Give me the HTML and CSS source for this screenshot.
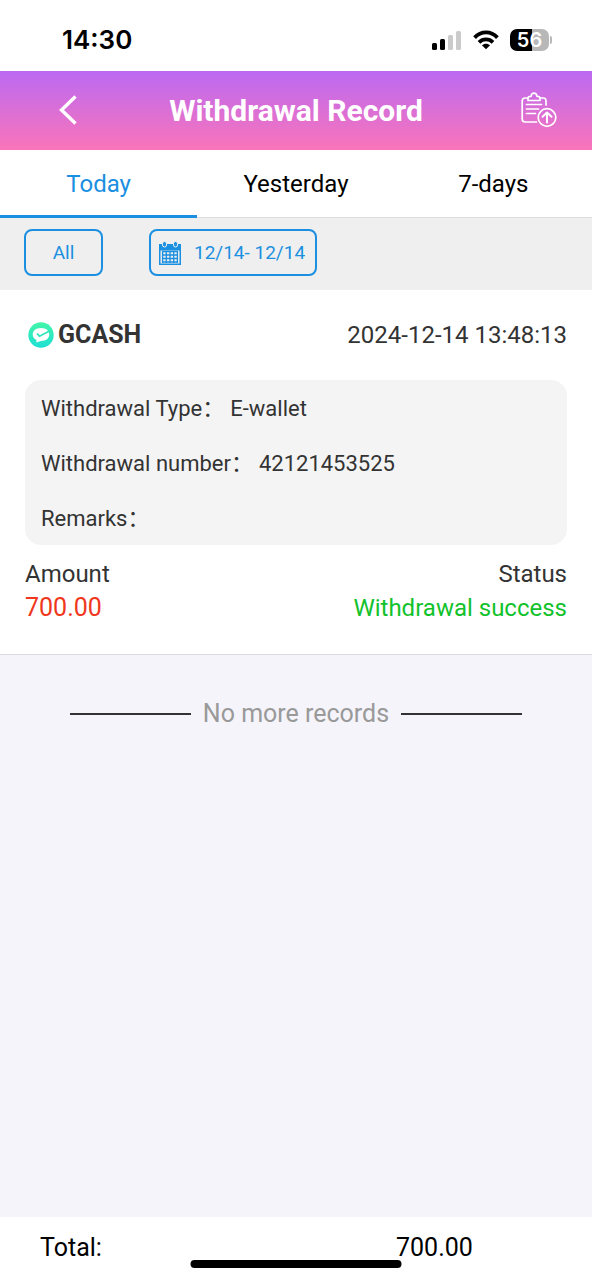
FILE: index.html
```html
<!DOCTYPE html>
<html lang="en">
<head>
<meta charset="utf-8">
<meta name="viewport" content="width=device-width, initial-scale=1">
<title>Withdrawal Record</title>
<link rel="stylesheet" href="styles.css">
</head>
<body>
<div class="app">
  <div class="status-bar">
    <time class="clock">14:30</time>
    <div class="indicators">
      <svg class="signal" width="30" height="19" viewBox="0 0 30 19" aria-hidden="true">
        <rect x="0" y="12" width="5" height="7" rx="1.5" fill="#000"/>
        <rect x="8" y="8" width="5" height="11" rx="1.5" fill="#000"/>
        <rect x="16" y="4" width="5" height="15" rx="1.5" fill="#cbcbcb"/>
        <rect x="24" y="0" width="5" height="19" rx="1.5" fill="#cbcbcb"/>
      </svg>
      <svg class="wifi" width="26" height="20" viewBox="0 0 26 20" aria-hidden="true">
        <g fill="none" stroke="#000" stroke-width="3.8">
          <path d="M1.6 7.6C8 .7 18 .7 24.400 7.600"/>
          <path d="M6 12.300C10 8.500 16 8.500 20 12.300"/>
        </g>
        <path d="M13 19.200 8.900 15.200C11.200 13.100 14.800 13.100 17.100 15.200Z" fill="#000"/>
      </svg>
      <div class="battery"><span class="battery-level">56</span></div>
    </div>
  </div>

  <header class="header">
    <button class="icon-button" type="button" aria-label="Back">
      <svg width="20" height="30" viewBox="0 0 20 30" fill="none" stroke="#fff" stroke-width="3.400"><path d="M17.500 1.500 3.500 15 17.500 28.500"/></svg>
    </button>
    <h1 class="title">Withdrawal Record</h1>
    <button class="icon-button icon-button-end" type="button" aria-label="Submit withdrawal">
      <svg width="36" height="36" viewBox="0 0 36 36" fill="none" stroke="#fff" stroke-width="1.700" stroke-linecap="round" stroke-linejoin="round">
        <path d="M6.500 6H4Q1.200 6 1.200 9V27Q1.200 30 4 30H15.500M19.500 6H22.500Q25 6 25 9V13"/>
        <path d="M7 8.500V6.500Q7 4.300 9.500 4.300H10Q10.500 1.200 13 1.200T16 4.300H16.500Q19 4.300 19 6.500V8.500Z"/>
        <path d="M5.500 12.500H20.500M5.500 17H17.500M5.500 21.500H14.500"/>
        <circle cx="26" cy="25.500" r="8.800"/>
        <path d="M26 30.500V20.500M21.500 24.800 26 20.500 30.500 24.800" stroke-width="2"/>
      </svg>
    </button>
  </header>

  <nav class="tabs">
    <button class="tab tab-active" type="button">Today</button>
    <button class="tab" type="button">Yesterday</button>
    <button class="tab" type="button">7-days</button>
  </nav>

  <div class="filters">
    <button class="filter filter-all" type="button">All</button>
    <button class="filter filter-date" type="button">
      <svg width="22" height="24" viewBox="0 0 22 24" aria-hidden="true">
        <path fill="#1b8fe0" fill-rule="evenodd" d="M0 3H22V24H0ZM1.500 9.500V22.500H20.500V9.500Z"/>
        <g fill="#1b8fe0" stroke="#efefef" stroke-width="1"><rect x="3.500" y=".5" width="4" height="5.500" rx="2"/><rect x="14.500" y=".5" width="4" height="5.500" rx="2"/></g>
        <path fill="none" stroke="#1b8fe0" stroke-width="1.300" d="M3.600 10.500V22M7.300 10.500V22M11 10.500V22M14.700 10.500V22M18.400 10.500V22M3 10.500H19M3 14H19M3 17.500H19M3 21H19"/>
      </svg>
      <span>12/14- 12/14</span>
    </button>
  </div>

  <main class="content">
    <article class="record">
      <div class="record-head">
        <h2 class="provider">
          <svg width="26" height="26" viewBox="0 0 26 26" aria-hidden="true">
            <defs><linearGradient id="mint" x1="0" y1="0" x2="0" y2="1"><stop offset="0" stop-color="#43f5a8"/><stop offset="1" stop-color="#1ce0d4"/></linearGradient></defs>
            <circle cx="13" cy="13" r="12.700" fill="url(#mint)"/>
            <path d="M13 6C18 6 21.300 8.800 21.300 12.500S18 19 13 19L8.300 20.500 8.500 18C6 17 4.700 15 4.700 12.500 4.700 8.800 8 6 13 6Z" fill="#fff"/>
            <path d="M9 11.500 11.500 14.200 21.500 9" fill="none" stroke="#2fe6bd" stroke-width="1.800"/>
          </svg>
          GCASH
        </h2>
        <time class="stamp">2024-12-14 13:48:13</time>
      </div>
      <dl class="details">
        <div class="detail"><dt>Withdrawal Type：</dt><dd>E-wallet</dd></div>
        <div class="detail"><dt>Withdrawal number：</dt><dd>42121453525</dd></div>
        <div class="detail"><dt>Remarks：</dt><dd></dd></div>
      </dl>
      <div class="summary">
        <div><div class="summary-label">Amount</div><div class="amount">700.00</div></div>
        <div class="summary-end"><div class="summary-label">Status</div><div class="status">Withdrawal success</div></div>
      </div>
    </article>
    <div class="end-note"><span class="rule"></span><span>No more records</span><span class="rule"></span></div>
  </main>

  <footer class="footer">
    <span>Total:</span>
    <span>700.00</span>
    <div class="home-indicator"></div>
  </footer>
</div>
</body>
</html>
```

FILE: styles.css
```css
* { box-sizing: border-box; }

body, h1, h2, dl, dd { margin: 0; }

body {
  background: #f4f4fa;
  color: #333;
  font-family: Roboto, "Noto Sans CJK SC", sans-serif;
  font-size: 24px;
  line-height: 32px;
}

button {
  margin: 0;
  padding: 0;
  border: 0;
  background: none;
  color: inherit;
  font: inherit;
  cursor: pointer;
}

svg { display: block; flex: none; }

.app {
  display: flex;
  flex-direction: column;
  min-height: 100vh;
}

.status-bar {
  display: flex;
  align-items: center;
  justify-content: space-between;
  padding: 24px 43px 15px 62px;
  background: #fff;
}

.clock {
  color: #000;
  font-family: Inter, sans-serif;
  font-size: 26px;
  font-weight: 600;
}

.indicators {
  display: flex;
  align-items: center;
  gap: 11px;
}

.battery {
  position: relative;
  width: 39px;
  height: 22px;
  border-radius: 7px;
  background: linear-gradient(90deg, #000 56%, #b8b8b8 56%);
  color: #fff;
  font-family: Inter, sans-serif;
  font-size: 20px;
  font-weight: 600;
  line-height: 22px;
  text-align: center;
}

.battery::after {
  position: absolute;
  top: 7px;
  right: -3px;
  width: 2px;
  height: 8px;
  border-radius: 0 2px 2px 0;
  background: #b8b8b8;
  content: "";
}

.header {
  display: grid;
  grid-template-columns: 90px 1fr 90px;
  align-items: center;
  padding: 20px 35px 19px;
  background: linear-gradient(#bb6af2, #fa74b9);
  color: #fff;
  text-align: center;
}

.title {
  font-size: 30px;
  font-weight: 700;
  line-height: 40px;
}

.icon-button {
  justify-self: start;
  padding: 0 0 2px 23px;
}

.icon-button-end {
  justify-self: end;
  padding-left: 0;
}

.tabs {
  display: grid;
  grid-template-columns: repeat(3, 1fr);
  background: #fff;
  box-shadow: inset 0 -1px #dedede;
}

.tab {
  padding: 18px 0 15px;
  border-bottom: 3px solid transparent;
  color: #000;
}

.tab-active {
  border-bottom-color: #1b8fe0;
  color: #1b8fe0;
}

.filters {
  display: flex;
  gap: 46px;
  padding: 11px 24px 14px;
  background: #efefef;
}

.filter {
  display: flex;
  align-items: center;
  justify-content: center;
  height: 47px;
  border: 2px solid #1b8fe0;
  border-radius: 8px;
  color: #1b8fe0;
  font-size: 19px;
}

.filter-all { width: 79px; }

.filter-date {
  gap: 13px;
  padding: 0 10px 0 8px;
}

.content { flex: 1; }

.record {
  padding: 29px 25px 30px;
  border-bottom: 1px solid #dcdce0;
  background: #fff;
}

.record-head {
  display: flex;
  align-items: center;
  justify-content: space-between;
}

.provider {
  display: flex;
  align-items: center;
  gap: 4px;
  padding-left: 3px;
  font-size: 25px;
  font-weight: 700;
}

.details {
  margin: 29px 0 13px;
  padding: 1px 16px 0;
  border-radius: 16px;
  background: #f4f4f4;
  font-size: 22px;
}

.detail {
  display: flex;
  gap: 6px;
  padding: 12px 0 11px;
}

.detail:last-child { padding-bottom: 10px; }

.summary {
  display: flex;
  justify-content: space-between;
}

.summary-end { text-align: right; }

.amount, .status { margin-top: 2px; }

.amount {
  color: #f0371c;
  font-size: 25px;
}

.status { color: #12c22b; }

.end-note {
  display: flex;
  align-items: center;
  justify-content: center;
  gap: 12px;
  padding: 43px 0;
  color: #999;
  font-size: 25px;
}

.rule {
  width: 121px;
  height: 2px;
  background: #333;
}

.footer {
  position: relative;
  display: grid;
  grid-template-columns: 356px 1fr;
  padding: 15px 40px 16px;
  background: #fff;
  color: #000;
  font-size: 25px;
}

.home-indicator {
  position: absolute;
  bottom: 12px;
  left: 50%;
  width: 211px;
  height: 8px;
  border-radius: 4px;
  background: #000;
  transform: translateX(-50%);
}
```
